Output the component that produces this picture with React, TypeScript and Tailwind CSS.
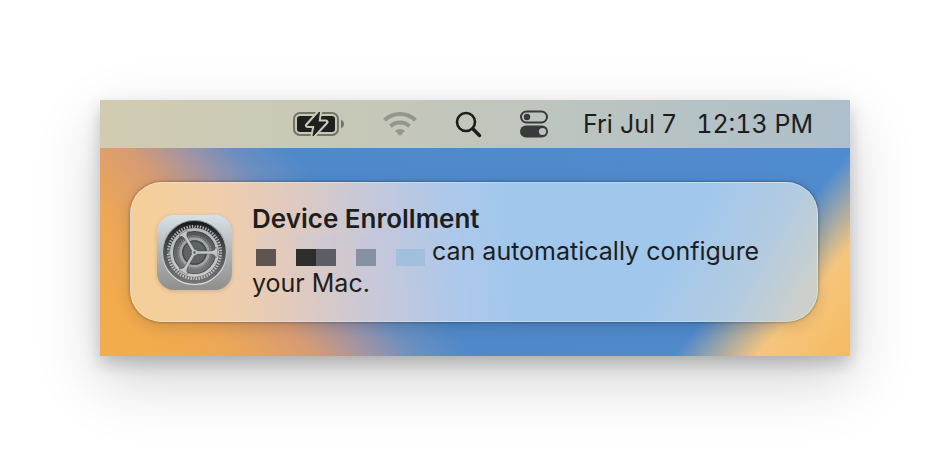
import React from 'react';

const BOLT = 'M26.5 2 L14.5 15.5 H22 L20 26 L33 12 H25 Z';

const BatteryIcon = () => (
  <svg width="52" height="28" viewBox="0 0 52 28" aria-hidden="true">
    <rect x="1" y="3" width="44" height="22" rx="6" fill="none" stroke="#1f1f1d" strokeOpacity="0.5" strokeWidth="2" />
    <path d="M48 10 C52 11 52 17 48 18 Z" fill="#1f1f1d" fillOpacity="0.5" />
    <rect x="4" y="6" width="38" height="16" rx="3" fill="#1f1f1d" />
    <path d={BOLT} fill="#1f1f1d" stroke="#c6c9b6" strokeWidth="5" strokeLinejoin="round" />
    <path d={BOLT} fill="#1f1f1d" stroke="#1f1f1d" strokeWidth="1" strokeLinejoin="round" />
  </svg>
);

const WifiIcon = () => (
  <svg width="34" height="26" viewBox="0 0 34 26" fill="none" stroke="#939790" aria-hidden="true">
    <path d="M1.5 9.2 A22.5 22.5 0 0 1 32.5 9.2" strokeWidth="4" />
    <path d="M7.5 15.2 A14 14 0 0 1 26.5 15.2" strokeWidth="4" />
    <path d="M17 25 L12 20 A7.5 7.5 0 0 1 22 20 Z" fill="#939790" stroke="none" />
  </svg>
);

const SearchIcon = () => (
  <svg width="27" height="27" viewBox="0 0 27 27" fill="none" stroke="#1c1d1c" aria-hidden="true">
    <circle cx="11" cy="11" r="9" strokeWidth="2.6" />
    <path d="M17.8 17.8 L24.5 24.5" strokeWidth="3.4" strokeLinecap="round" />
  </svg>
);

const ControlCenterIcon = () => (
  <svg width="29" height="28" viewBox="0 0 29 28" aria-hidden="true">
    <rect x="1" y="1.5" width="26" height="11" rx="5.5" fill="none" stroke="#393b3a" strokeWidth="2" />
    <circle cx="7" cy="7" r="3.2" fill="#393b3a" />
    <rect x="0" y="15.5" width="28" height="12" rx="6" fill="#393b3a" />
    <circle cx="22.5" cy="21.5" r="3.6" fill="#b9c2bf" />
  </svg>
);

const SettingsIcon = () => (
  <svg width="75" height="78" viewBox="0 -3 75 78" className="shrink-0 overflow-visible drop-shadow-sm" aria-hidden="true">
    <defs>
      <linearGradient id="tile" x1="0" y1="0" x2="0" y2="1">
        <stop offset="0" stopColor="#d6e1e7" />
        <stop offset="0.5" stopColor="#b0b5b8" />
        <stop offset="1" stopColor="#8f8e8c" />
      </linearGradient>
      <linearGradient id="well" x1="0" y1="0" x2="0" y2="1">
        <stop offset="0" stopColor="#151718" />
        <stop offset="0.5" stopColor="#505254" />
        <stop offset="1" stopColor="#757678" />
      </linearGradient>
      <linearGradient id="rim" x1="0" y1="0" x2="0" y2="1">
        <stop offset="0" stopColor="#8d9496" />
        <stop offset="1" stopColor="#e2e4e5" />
      </linearGradient>
      <linearGradient id="plate" x1="0" y1="0" x2="0" y2="1">
        <stop offset="0" stopColor="#515355" />
        <stop offset="1" stopColor="#77797b" />
      </linearGradient>
      <linearGradient id="gear" gradientUnits="userSpaceOnUse" x1="0" y1="10" x2="0" y2="65">
        <stop offset="0" stopColor="#b3b9bc" />
        <stop offset="1" stopColor="#c9cbcc" />
      </linearGradient>
    </defs>
    <rect x="0" y="0" width="75" height="75" rx="17" fill="url(#tile)" />
    <circle cx="37.5" cy="37.5" r="32" fill="url(#well)" stroke="url(#rim)" strokeWidth="1.2" />
    <circle cx="37.5" cy="37.5" r="25.8" fill="none" stroke="url(#gear)" strokeWidth="3.6" pathLength="120" strokeDasharray="1 1" />
    <circle cx="37.5" cy="37.5" r="22" fill="url(#plate)" />
    <circle cx="37.5" cy="37.5" r="16.4" fill="none" stroke="#8b8f90" strokeWidth="1.8" pathLength="96" strokeDasharray="1 1" />
    <circle cx="37.5" cy="37.5" r="13.8" fill="none" stroke="#a0a4a6" strokeWidth="3" />
    <circle cx="37.5" cy="37.5" r="12.3" fill="#46484a" />
    <circle cx="37.5" cy="37.5" r="10.8" fill="#606264" />
    <circle cx="37.5" cy="37.5" r="22.8" fill="none" stroke="#2c2e30" strokeOpacity="0.6" strokeWidth="4.2" />
    <circle cx="37.5" cy="37.5" r="23" fill="none" stroke="url(#gear)" strokeWidth="3" />
    <g fill="#c0c5c7">
      {[0, 120, 240].map((angle) => (
        <path
          key={angle}
          transform={`rotate(${angle} 37.5 37.5)`}
          stroke="#2c2e30"
          strokeOpacity="0.5"
          strokeWidth="0.6"
          d="M37.5 36 H54.5 Q58.5 35.6 58.8 32 L60.5 34 V41 L58.8 43 Q58.5 39.4 54.5 39 H37.5 Z"
        />
      ))}
    </g>
    <circle cx="37.5" cy="37.5" r="2.8" fill="#c0c5c7" />
    <circle cx="37.5" cy="37.5" r="1.2" fill="#55575a" />
  </svg>
);

const MenuBar = () => (
  <header className="flex h-12 items-center justify-end bg-linear-to-r from-[#d1ccb1] via-[#c1c6bb] to-[#adbfcb] pr-[37px] text-[25px] leading-8 text-[#1c1e1e]">
    <div className="flex items-center gap-[38px]">
      <button type="button" aria-label="Battery"><BatteryIcon /></button>
      <button type="button" aria-label="Wi-Fi"><WifiIcon /></button>
      <button type="button" aria-label="Search"><SearchIcon /></button>
      <button type="button" aria-label="Control Center"><ControlCenterIcon /></button>
    </div>
    <time className="ml-[34px] flex gap-5 whitespace-nowrap">
      <span>Fri Jul 7</span>
      <span className="tabular-nums">12:13 PM</span>
    </time>
  </header>
);

// Pixelated organization name, two rows of mosaic cells
const RedactedName = () => (
  <span className="ml-1 mr-[7px] inline-grid h-8 grid-cols-[repeat(7,20px)_29px] grid-rows-[14px_17px] align-bottom">
    <span className="bg-[#dccdc4]/60" />
    <span />
    <span className="bg-[#cfc9cf]/60" />
    <span className="bg-[#cacad8]/60" />
    <span />
    <span className="bg-[#bcc8e0]/30" />
    <span />
    <span />
    <span className="bg-[#5f5550]" />
    <span />
    <span className="bg-[#2d2d2d]" />
    <span className="bg-[#5d5d63]" />
    <span />
    <span className="bg-[#8791a4]" />
    <span />
    <span className="bg-[#a3bfde]" />
  </span>
);

const Notification = () => (
  <section className="flex items-center gap-5 rounded-[32px] border border-white/30 bg-[linear-gradient(120deg,transparent_76%,#b3cbe0_88%,#cdd0ca_97%),linear-gradient(84deg,#f4cf9a_4%,#f0ceaa_14%,#e0cabf_24%,#c6c8da_36%,#adc8ea_47%,#a1c7ed_56%)] pt-5 pr-6 pb-[22px] pl-[26px] shadow-[0_0_3px_rgba(0,0,0,0.45),0_4px_16px_rgba(0,0,0,0.15)]">
    <SettingsIcon />
    <div className="min-w-0 flex-1 leading-8 text-[#1d1e20]">
      <h1 className="text-[26px] leading-8 font-semibold">Device Enrollment</h1>
      <p className="text-[25px] leading-8">
        <RedactedName />
        can automatically configure your Mac.
      </p>
    </div>
  </section>
);

export default function App() {
  return (
    <main className="bg-white p-[100px] font-['Inter',sans-serif]">
      <div className="shadow-[0_8px_16px_rgba(0,0,0,0.2),0_24px_60px_rgba(0,0,0,0.18)]">
        <MenuBar />
        <div className="bg-[linear-gradient(131deg,transparent_81%,#f6c67d_90%,#f5b960_100%),linear-gradient(48deg,#f2ac4c_6%,#eca659_15%,#d69b74_23%,#a094a5_29%,#6b8fc0_34%,#5089c9_40%,#4f8ccf_100%)] py-[34px] pr-8 pl-[30px]">
          <Notification />
        </div>
      </div>
    </main>
  );
}
